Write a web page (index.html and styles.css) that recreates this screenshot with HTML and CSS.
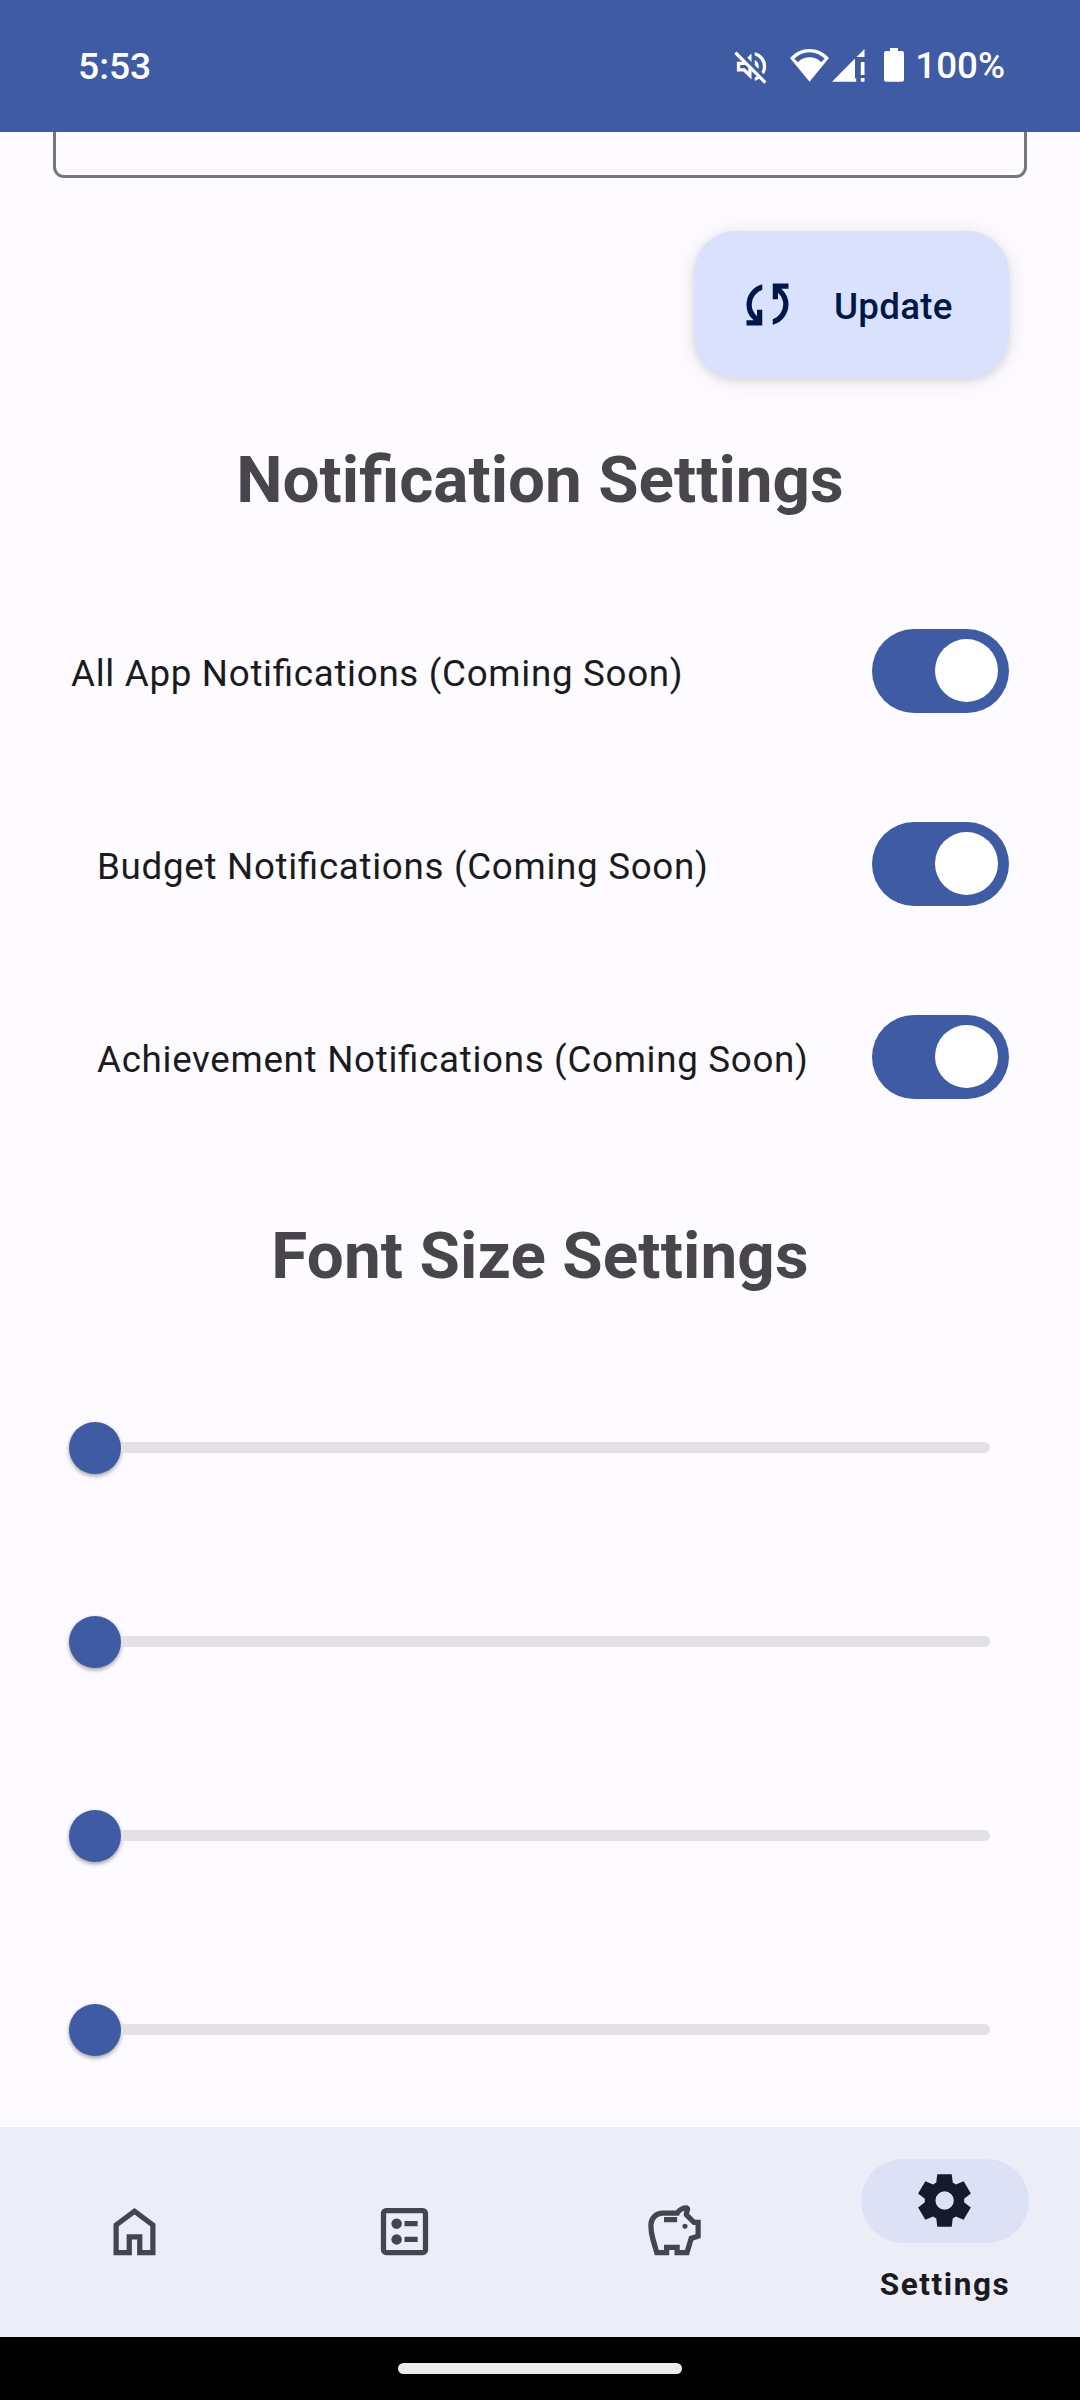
FILE: index.html
```
<!DOCTYPE html>
<html lang="en">
<head>
<meta charset="utf-8">
<title>Settings</title>
<link rel="stylesheet" href="styles.css">
</head>
<body>
<div class="screen">
  <header class="status-bar">
    <span class="clock">5:53</span>
    <div class="status-icons">
      <svg class="icon-mute" viewBox="0 -960 960 960"><path d="M792-56 671-177q-25 16-53 27.5T560-131v-82q14-5 27.5-10t25.5-12L480-368v208L280-360H120v-240h128L56-792l56-56 736 736-56 56Zm-8-232-58-58q17-31 25.5-65t8.5-70q0-94-55-168T560-749v-82q124 28 202 125.5T840-481q0 53-14.5 102T784-288ZM650-422l-90-90v-130q47 22 73.5 66t26.5 96q0 15-2.5 29.5T650-422ZM480-592 376-696l104-104v208Zm-80 238v-94l-72-72H200v80h114l86 86Z"/></svg>
      <svg class="icon-wifi" viewBox="0 0 39 33"><path fill-rule="evenodd" d="M0 9C5.500 3 12 0 19.500 0S33.500 3 39 9L19.500 32.700ZM4.300 9.700L8 13.200C10.500 9.800 15 8.300 19.500 8.300S28.500 9.800 31 13.200L34.700 9.700C30.500 5.600 25.500 3.300 19.500 3.300S8.500 5.600 4.300 9.700Z"/></svg>
      <svg class="icon-signal" viewBox="0 0 32.500 33"><path d="M0 32.700L23 9.500V32.700ZM32.500 0V8H24.500ZM28.800 13h3.700v13h-3.700ZM28.800 29h3.700v3.700h-3.700ZM23 29.500h1.200v3.200h-1.200Z"/></svg>
      <svg class="icon-battery" viewBox="0 0 20 34"><path d="M6 0h8v3h4a2 2 0 0 1 2 2v26.700a2 2 0 0 1-2 2h-16a2 2 0 0 1-2-2v-26.700a2 2 0 0 1 2-2h4Z"/></svg>
      <span class="battery-level">100%</span>
    </div>
  </header>

  <main class="content">
    <div class="text-field"></div>
    <button class="update-button">
      <svg viewBox="0 -960 960 960"><path d="M160-160v-80h110l-16-14q-52-46-73-105t-21-119q0-111 66.500-197.500T400-790v84q-72 26-116 88.500T240-478q0 45 17 87.500t53 78.500l10 10v-98h80v240H160Zm400-10v-84q72-26 116-88.500T720-482q0-45-17-87.500T650-648l-10-10v98h-80v-240h240v80H690l16 14q49 49 71.500 106.500T800-482q0 111-66.500 197.500T560-170Z"/></svg>
      <span>Update</span>
    </button>

    <h2 class="heading">Notification Settings</h2>
    <div class="switches">
      <div class="switch-row"><span>All App Notifications (Coming Soon)</span><div class="switch"><i></i></div></div>
      <div class="switch-row nested"><span>Budget Notifications (Coming Soon)</span><div class="switch"><i></i></div></div>
      <div class="switch-row nested"><span>Achievement Notifications (Coming Soon)</span><div class="switch"><i></i></div></div>
    </div>

    <h2 class="heading font-heading">Font Size Settings</h2>
    <div class="sliders">
      <div class="slider"><i class="thumb"></i><i class="track"></i></div>
      <div class="slider"><i class="thumb"></i><i class="track"></i></div>
      <div class="slider"><i class="thumb"></i><i class="track"></i></div>
      <div class="slider"><i class="thumb"></i><i class="track"></i></div>
    </div>
  </main>

  <nav class="nav-bar">
    <div class="nav-item">
      <svg viewBox="0 -960 960 960"><path d="M240-200h120v-240h240v240h120v-360L480-740 240-560v360Zm-80 80v-480l320-240 320 240v480H520v-240h-80v240H160Z"/></svg>
    </div>
    <div class="nav-item">
      <svg viewBox="0 -960 960 960"><path fill-rule="evenodd" d="M200-120q-33 0-56.500-23.500T120-200v-560q0-33 23.500-56.500T200-840h560q33 0 56.500 23.500T840-760v560q0 33-23.500 56.500T760-120H200Zm0-80h560v-560H200Z"/><circle cx="360" cy="-600" r="80"/><circle cx="360" cy="-360" r="80"/><path d="M480-640h200v80H480ZM480-400h200v80H480Z"/></svg>
    </div>
    <div class="nav-item">
      <svg viewBox="0 -960 960 960"><path d="M640-520q17 0 28.500-11.500T680-560q0-17-11.500-28.500T640-600q-17 0-28.500 11.500T600-560q0 17 11.500 28.500T640-520ZM320-620h200v-80H320v80ZM180-120q-34-114-67-227.500T80-580q0-92 64-156t156-64h200q29-38 70.500-59t89.500-21q25 0 42.500 17.500T720-820q0 6-1.500 12t-3.500 11q-4 11-7.500 22.500T702-751l91 91h87v279l-113 37-67 224H480v-80h-80v80H180Zm60-80h80v-80h240v80h80l62-206 98-33v-141h-40L620-720q0-20 2.500-38.500T630-796q-29 8-51 27.500T547-720H300q-58 0-99 41t-41 99q0 98 27 191.500T240-200Z"/></svg>
    </div>
    <div class="nav-item active">
      <div class="indicator">
        <svg viewBox="0 -960 960 960"><path d="m370-80-16-128q-13-5-24.500-12T307-235l-119 50L78-375l103-78q-1-7-1-13.500v-27q0-6.500 1-13.500L78-585l110-190 119 50q11-8 23-15t24-12l16-128h220l16 128q13 5 24.500 12t22.500 15l119-50 110 190-103 78q1 7 1 13.500v27q0 6.500-2 13.500l103 78-110 190-118-50q-11 8-23 15t-24 12L590-80H370Zm112-260q58 0 99-41t41-99q0-58-41-99t-99-41q-59 0-99.500 41T342-480q0 58 40.500 99t99.500 41Z"/></svg>
      </div>
      <span class="nav-label">Settings</span>
    </div>
  </nav>
  <div class="gesture-bar"><i></i></div>
</div>
</body>
</html>
```
FILE: styles.css
```
* { box-sizing: border-box; }

body {
  margin: 0;
  background: #fdfbff;
  color: #1b1b1f;
  font-family: Roboto, "Liberation Sans", sans-serif;
}

svg { display: block; fill: currentColor; flex: none; }

.screen {
  width: 1080px;
  height: 2400px;
  display: flex;
  flex-direction: column;
  overflow: hidden;
}

/* Status bar */
.status-bar {
  height: 132px;
  flex: none;
  padding: 0 75px 0 78px;
  display: flex;
  justify-content: space-between;
  background: #3f5ba3;
  color: #fff;
  font-size: 36.75px;
  font-weight: 500;
}
.clock { line-height: 133px; font-size: 37.2px; }
.battery-level { line-height: 44px; margin: 44px 0 0 11px; }
.status-icons { display: flex; align-items: flex-start; }
.icon-mute { width: 39px; height: 39px; margin-top: 47px; }
.icon-wifi { width: 39px; height: 33px; margin: 49px 0 0 19px; }
.icon-signal { width: 32.5px; height: 33px; margin: 49px 0 0 3px; }
.icon-battery { width: 20px; height: 34px; margin: 48px 0 0 19.5px; }

/* Scrolling content */
.content {
  flex: 1;
  min-height: 0;
  overflow: hidden;
  display: flex;
  flex-direction: column;
}
.text-field {
  height: 46px;
  flex: none;
  margin: 0 53px;
  border: 3px solid #74777f;
  border-top: 0;
  border-radius: 0 0 11px 11px;
}
.update-button {
  width: 315px;
  height: 147px;
  flex: none;
  margin: 53px 71px 0 0;
  padding: 0 0 0 42px;
  align-self: flex-end;
  display: flex;
  align-items: center;
  gap: 35px;
  border: 0;
  border-radius: 42px;
  background: #dae1fc;
  color: #001847;
  font: 500 36.75px/44px Roboto, sans-serif;
  letter-spacing: 0.26px;
  box-shadow: 0 3px 9px rgba(0, 0, 0, 0.11), 0 2px 26px rgba(0, 0, 0, 0.08);
}
.update-button svg { width: 63px; height: 63px; }
.update-button span { margin-top: 5px; }

.heading {
  margin: 63px 0 0;
  font-size: 65.625px;
  line-height: 77px;
  font-weight: 700;
  text-align: center;
  color: #48454e;
}
.font-heading { margin-top: 118px; letter-spacing: 0.1px; }

.switches {
  margin: 111px 71px 0 71px;
  display: flex;
  flex-direction: column;
  gap: 109px;
}
.switch-row {
  height: 84px;
  display: flex;
  align-items: center;
  justify-content: space-between;
  font-size: 36.75px;
  line-height: 44px;
  letter-spacing: 0.69px;
  font-feature-settings: "liga" 1;
}
.switch-row span { margin-top: 6px; }
.nested { padding-left: 26px; }
.switch {
  width: 137px;
  height: 84px;
  padding-right: 11px;
  display: flex;
  align-items: center;
  justify-content: flex-end;
  border-radius: 42px;
  background: #3f5ba3;
}
.switch i { width: 63px; height: 63px; margin-bottom: 1px; border-radius: 50%; background: #fff; }

.sliders {
  margin: 128px 90px 0 69px;
  display: flex;
  flex-direction: column;
  gap: 142px;
}
.slider { height: 52px; display: flex; align-items: center; }
.thumb {
  width: 52px;
  height: 52px;
  flex: none;
  border-radius: 50%;
  background: #3f5ba3;
  box-shadow: 0 2px 4px rgba(0, 0, 0, 0.38);
}
.track { flex: 1; height: 11px; margin-bottom: 1px; border-radius: 0 6px 6px 0; background: #e3e0e7; }

/* Bottom navigation */
.nav-bar {
  height: 210px;
  flex: none;
  display: grid;
  grid-template-columns: repeat(4, 1fr);
  background: #ecedf6;
  color: #44464f;
}
.nav-item {
  display: flex;
  flex-direction: column;
  align-items: center;
  justify-content: center;
}
.nav-item svg { width: 63px; height: 63px; margin: 0 1px 1px 0; }
.active { justify-content: flex-start; padding-top: 32px; }
.indicator {
  width: 168px;
  height: 84px;
  display: flex;
  align-items: center;
  justify-content: center;
  border-radius: 42px;
  background: #dce1f6;
  color: #151b2c;
}
.nav-label {
  margin-top: 21px;
  font-size: 31.5px;
  line-height: 42px;
  font-weight: 700;
  letter-spacing: 1.6px;
  color: #1b1b1f;
}
.gesture-bar {
  height: 63px;
  flex: none;
  display: flex;
  align-items: center;
  justify-content: center;
  background: #000;
}
.gesture-bar i { width: 284px; height: 11px; border-radius: 6px; background: #ebebeb; }
```
